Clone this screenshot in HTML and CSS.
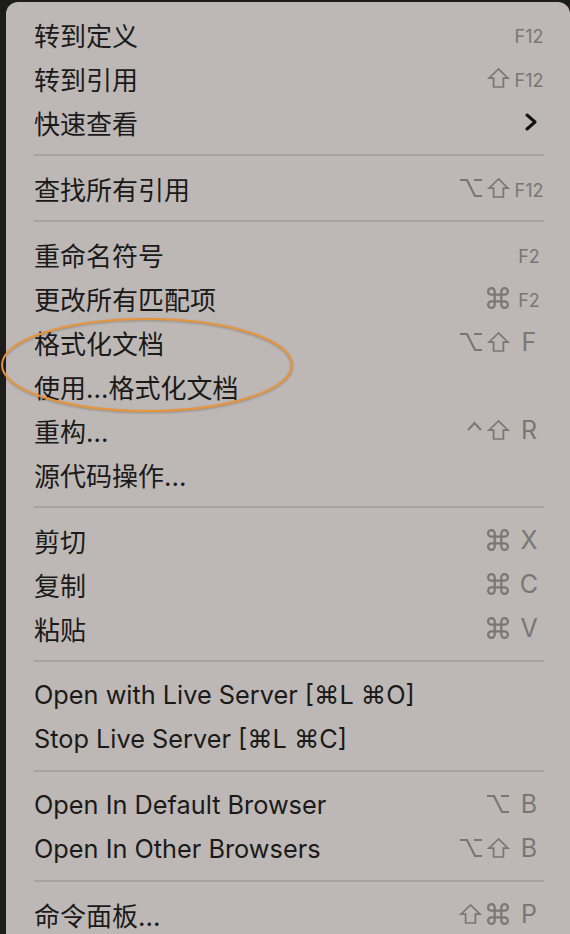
FILE: index.html
```html
<!DOCTYPE html>
<html lang="zh-CN">
<head>
<meta charset="utf-8">
<title>Context menu</title>
<link rel="stylesheet" href="styles.css">
</head>
<body>
<div class="menu">
  <div class="item"><span class="label zh">转到定义</span><span class="keys"><span class="key fkey">F12</span></span></div>
  <div class="item"><span class="label zh">转到引用</span><span class="keys"><span class="mods"><svg class="m-shift" viewBox="0 0 21 20"><path d="M10.5 1 L1 10.2 H5.6 V19 H15.4 V10.2 H20 Z"/></svg></span><span class="key fkey">F12</span></span></div>
  <div class="item"><span class="label zh">快速查看</span><span class="keys"><svg class="chev" viewBox="0 0 12 18"><path d="M2 2 L10 9 L2 16"/></svg></span></div>
  <div class="sep"></div>
  <div class="item"><span class="label zh">查找所有引用</span><span class="keys"><span class="mods"><svg class="m-opt" viewBox="0 0 22 18"><path d="M0 1 H7 L15 17 H22 M14 1 H22"/></svg><svg class="m-shift" viewBox="0 0 21 20"><path d="M10.5 1 L1 10.2 H5.6 V19 H15.4 V10.2 H20 Z"/></svg></span><span class="key fkey">F12</span></span></div>
  <div class="sep"></div>
  <div class="item"><span class="label zh">重命名符号</span><span class="keys"><span class="key fkey">F2</span></span></div>
  <div class="item"><span class="label zh">更改所有匹配项</span><span class="keys"><span class="mods"><svg class="m-cmd" viewBox="2 2 20 20"><path d="M15 6v12a3 3 0 1 0 3-3H6a3 3 0 1 0 3 3V6a3 3 0 1 0-3 3h12a3 3 0 1 0-3-3"/></svg></span><span class="key fkey">F2</span></span></div>
  <div class="item"><span class="label zh">格式化文档</span><span class="keys"><span class="mods"><svg class="m-opt" viewBox="0 0 22 18"><path d="M0 1 H7 L15 17 H22 M14 1 H22"/></svg><svg class="m-shift" viewBox="0 0 21 20"><path d="M10.5 1 L1 10.2 H5.6 V19 H15.4 V10.2 H20 Z"/></svg></span><span class="key">F</span></span></div>
  <div class="item"><span class="label zh">使用...格式化文档</span></div>
  <div class="item"><span class="label zh">重构...</span><span class="keys"><span class="mods"><svg class="m-ctrl" viewBox="0 0 15 10"><path d="M1 9 L7.5 2 L14 9"/></svg><svg class="m-shift" viewBox="0 0 21 20"><path d="M10.5 1 L1 10.2 H5.6 V19 H15.4 V10.2 H20 Z"/></svg></span><span class="key">R</span></span></div>
  <div class="item"><span class="label zh">源代码操作...</span></div>
  <div class="sep"></div>
  <div class="item"><span class="label zh">剪切</span><span class="keys"><span class="mods"><svg class="m-cmd" viewBox="2 2 20 20"><path d="M15 6v12a3 3 0 1 0 3-3H6a3 3 0 1 0 3 3V6a3 3 0 1 0-3 3h12a3 3 0 1 0-3-3"/></svg></span><span class="key">X</span></span></div>
  <div class="item"><span class="label zh">复制</span><span class="keys"><span class="mods"><svg class="m-cmd" viewBox="2 2 20 20"><path d="M15 6v12a3 3 0 1 0 3-3H6a3 3 0 1 0 3 3V6a3 3 0 1 0-3 3h12a3 3 0 1 0-3-3"/></svg></span><span class="key">C</span></span></div>
  <div class="item"><span class="label zh">粘贴</span><span class="keys"><span class="mods"><svg class="m-cmd" viewBox="2 2 20 20"><path d="M15 6v12a3 3 0 1 0 3-3H6a3 3 0 1 0 3 3V6a3 3 0 1 0-3 3h12a3 3 0 1 0-3-3"/></svg></span><span class="key">V</span></span></div>
  <div class="sep"></div>
  <div class="item"><span class="label">Open with Live Server [⌘L ⌘O]</span></div>
  <div class="item"><span class="label">Stop Live Server [⌘L ⌘C]</span></div>
  <div class="sep"></div>
  <div class="item"><span class="label">Open In Default Browser</span><span class="keys"><span class="mods"><svg class="m-opt" viewBox="0 0 22 18"><path d="M0 1 H7 L15 17 H22 M14 1 H22"/></svg></span><span class="key">B</span></span></div>
  <div class="item"><span class="label">Open In Other Browsers</span><span class="keys"><span class="mods"><svg class="m-opt" viewBox="0 0 22 18"><path d="M0 1 H7 L15 17 H22 M14 1 H22"/></svg><svg class="m-shift" viewBox="0 0 21 20"><path d="M10.5 1 L1 10.2 H5.6 V19 H15.4 V10.2 H20 Z"/></svg></span><span class="key">B</span></span></div>
  <div class="sep"></div>
  <div class="item"><span class="label zh">命令面板...</span><span class="keys"><span class="mods"><svg class="m-shift" viewBox="0 0 21 20"><path d="M10.5 1 L1 10.2 H5.6 V19 H15.4 V10.2 H20 Z"/></svg><svg class="m-cmd" viewBox="2 2 20 20"><path d="M15 6v12a3 3 0 1 0 3-3H6a3 3 0 1 0 3 3V6a3 3 0 1 0-3 3h12a3 3 0 1 0-3-3"/></svg></span><span class="key">P</span></span></div>

  <svg class="annot" viewBox="0 0 300 110"><ellipse cx="147" cy="55" rx="145" ry="46"/></svg>
</div>
</body>
</html>
```

FILE: styles.css
```css
html, body {
  margin: 0;
  padding: 0;
  background: #1c1c1c;
  height: 100%;
  overflow: hidden;
}

.menu {
  position: relative;
  margin: 2px 0 0 6px;
  min-height: 960px;
  background: #bdb8b6;
  border-radius: 12px 12px 0 0;
  padding-top: 10px;
  box-sizing: border-box;
  font-family: "Inter", "Noto Sans CJK SC", sans-serif;
  color: #1b1a19;
}

.item {
  display: flex;
  align-items: center;
  height: 44px;
  padding: 0 26px 0 28px;
}

.label {
  font-size: 25.3px;
  white-space: nowrap;
}

.label.zh {
  font-size: 26px;
}

.keys {
  margin-left: auto;
  display: flex;
  align-items: center;
  color: #7a7674;
}

.mods {
  display: flex;
  align-items: center;
  gap: 6px;
  margin-right: 5px;
}

.mods svg {
  fill: none;
  stroke: #7a7674;
  overflow: visible;
  display: block;
}

.m-shift { width: 21px; height: 20px; stroke-width: 1.7; stroke-linejoin: miter; }
.m-opt { width: 22px; height: 18px; stroke-width: 2.2; }
.m-cmd { width: 22px; height: 22px; stroke-width: 2; }
.m-ctrl { width: 15px; height: 10px; stroke-width: 2; margin-top: -9px; }

.key {
  width: 30px;
  text-align: center;
  font-size: 25px;
  line-height: 1;
}

.fkey {
  font-size: 18px;
  padding-top: 5px;
}

.chev {
  width: 12px;
  height: 18px;
  margin-right: 7px;
  fill: none;
  stroke: #111;
  stroke-width: 3;
  stroke-linecap: round;
  stroke-linejoin: round;
}

.sep {
  height: 2px;
  margin: 10px 26px 10px 28px;
  background: #a8a3a1;
}

.annot {
  position: absolute;
  left: -6px;
  top: 308px;
  width: 300px;
  height: 110px;
  overflow: visible;
  pointer-events: none;
  fill: none;
  stroke: #e8953a;
  stroke-width: 2;
  filter: drop-shadow(0 1px 1px rgba(60, 40, 20, 0.35));
}
```
